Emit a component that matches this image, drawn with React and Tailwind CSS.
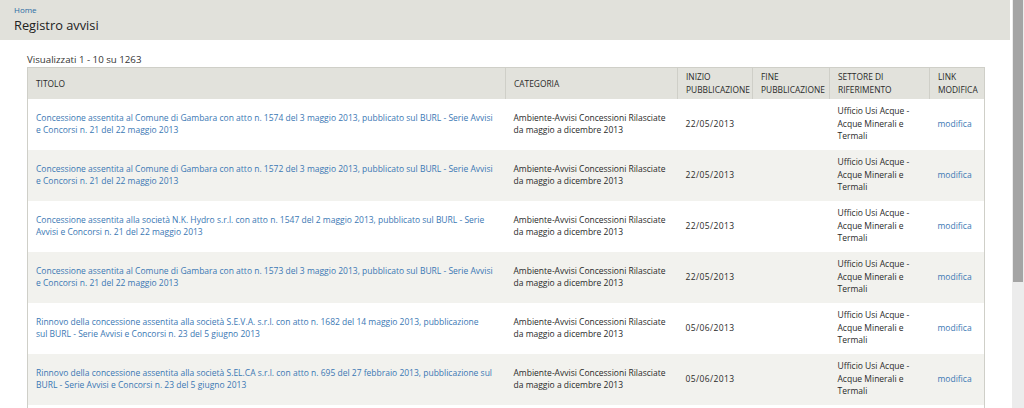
import React from 'react';

const rows = [
  {
    title: [
      'Concessione assentita al Comune di Gambara con atto n. 1574 del 3 maggio 2013, pubblicato sul BURL - Serie Avvisi',
      'e Concorsi n. 21 del 22 maggio 2013',
    ],
    date: '22/05/2013',
  },
  {
    title: [
      'Concessione assentita al Comune di Gambara con atto n. 1572 del 3 maggio 2013, pubblicato sul BURL - Serie Avvisi',
      'e Concorsi n. 21 del 22 maggio 2013',
    ],
    date: '22/05/2013',
  },
  {
    title: [
      'Concessione assentita alla società N.K. Hydro s.r.l. con atto n. 1547 del 2 maggio 2013, pubblicato sul BURL - Serie',
      'Avvisi e Concorsi n. 21 del 22 maggio 2013',
    ],
    date: '22/05/2013',
  },
  {
    title: [
      'Concessione assentita al Comune di Gambara con atto n. 1573 del 3 maggio 2013, pubblicato sul BURL - Serie Avvisi',
      'e Concorsi n. 21 del 22 maggio 2013',
    ],
    date: '22/05/2013',
  },
  {
    title: [
      'Rinnovo della concessione assentita alla società S.E.V.A. s.r.l. con atto n. 1682 del 14 maggio 2013, pubblicazione',
      'sul BURL - Serie Avvisi e Concorsi n. 23 del 5 giugno 2013',
    ],
    date: '05/06/2013',
  },
  {
    title: [
      'Rinnovo della concessione assentita alla società S.EL.CA s.r.l. con atto n. 695 del 27 febbraio 2013, pubblicazione sul',
      'BURL - Serie Avvisi e Concorsi n. 23 del 5 giugno 2013',
    ],
    date: '05/06/2013',
  },
  {
    title: [
      'Concessione assentita al Comune di Gambara con atto n. 1571 del 3 maggio 2013, pubblicato sul BURL - Serie Avvisi',
      'e Concorsi n. 21 del 22 maggio 2013',
    ],
    date: '22/05/2013',
  },
];

const th = 'border-r border-[#cfcfc8] px-2 text-left align-middle font-normal';

export default function App() {
  return (
    <div className="flex h-[408px] w-[1024px] overflow-hidden bg-white font-['Open_Sans',sans-serif] text-[#333]">
      <div className="flex-1 overflow-hidden">
        {/* Page header */}
        <div className="h-[40px] bg-[#e1e1db] pl-[14px] pt-[4px]">
          <div className="text-[8px] leading-[12px] text-[#2b6ca3]">Home</div>
          <h1 className="text-[12.8px] leading-[18px] font-normal text-[#222]">Registro avvisi</h1>
        </div>

        <div className="pl-[27px] pr-[26px] pt-[13px]">
          <div className="text-[9.7px] leading-[14px] text-[#333]">Visualizzati 1 - 10 su 1263</div>

          <table className="w-[957px] table-fixed border-collapse border border-[#cfcfc8]">
            <colgroup>
              <col className="w-[478px]" />
              <col className="w-[172px]" />
              <col className="w-[75px]" />
              <col className="w-[77px]" />
              <col className="w-[100px]" />
              <col className="w-[55px]" />
            </colgroup>
            <thead>
              <tr className="h-[31px] bg-[#e2e2dc] text-[8.4px] leading-[13px] text-[#2a2a2a]">
                <th className={th}>TITOLO</th>
                <th className={th}>CATEGORIA</th>
                <th className={th}>INIZIO<br />PUBBLICAZIONE</th>
                <th className={th}>FINE<br />PUBBLICAZIONE</th>
                <th className={th}>SETTORE DI<br />RIFERIMENTO</th>
                <th className="px-2 text-left align-middle font-normal">LINK<br />MODIFICA</th>
              </tr>
            </thead>
            <tbody className="text-[8.5px] leading-[12.5px]">
              {rows.map((r, i) => (
                <tr key={i} className={`h-[51px] ${i % 2 === 1 ? 'bg-[#f2f2ee]' : 'bg-white'}`}>
                  <td className="whitespace-nowrap px-2 align-middle text-[#3b78b4]">
                    {r.title[0]}
                    <br />
                    {r.title[1]}
                  </td>
                  <td className="px-2 align-middle text-[#2a2a2a]">
                    Ambiente-Avvisi Concessioni Rilasciate da maggio a dicembre 2013
                  </td>
                  <td className="px-2 align-middle tracking-[0.4px] text-[#2a2a2a]">{r.date}</td>
                  <td className="px-2 align-middle"></td>
                  <td className="px-2 align-middle text-[#2a2a2a]">Ufficio Usi Acque - Acque Minerali e Termali</td>
                  <td className="px-2 align-middle text-[#3b78b4]">modifica</td>
                </tr>
              ))}
            </tbody>
          </table>
        </div>
      </div>

      {/* Scrollbar */}
      <div className="flex w-[14px] flex-col border-l-2 border-white bg-[#ececec]">
        <div className="mx-[1px] h-[282px] bg-[#a4a4a4]" />
      </div>
    </div>
  );
}
